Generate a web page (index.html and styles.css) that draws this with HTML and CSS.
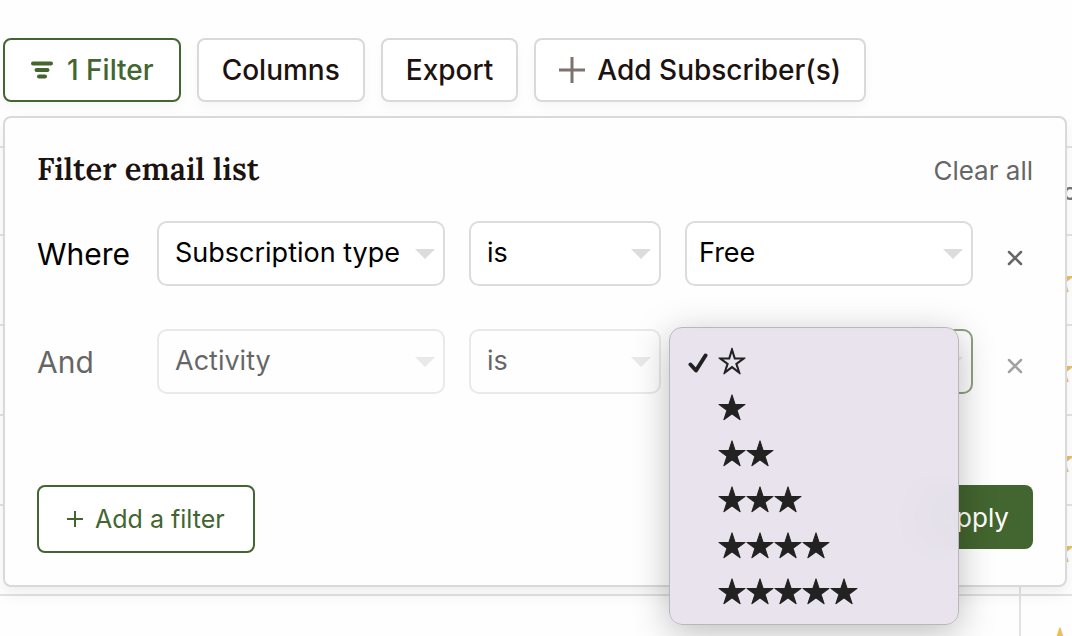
FILE: index.html
```
<!DOCTYPE html>
<html lang="en">
<head>
    <meta charset="UTF-8">
    <meta name="viewport" content="width=device-width, initial-scale=1.0">
    <title>Subscribers</title>
    <link rel="stylesheet" href="styles.css">
</head>
<body>
    <div class="toolbar">
        <button class="button button-active" type="button">
            <svg class="filter-icon" viewBox="0 0 22 18" aria-hidden="true">
                <path d="M2 2.500H20M5.500 9H16.500M8 15.500H14" />
            </svg>
            1 Filter
        </button>
        <button class="button" type="button">Columns</button>
        <button class="button" type="button">Export</button>
        <button class="button" type="button">
            <svg class="plus-icon" viewBox="0 0 26 26" aria-hidden="true">
                <path d="M13 0V26M0 13H26" />
            </svg>
            Add Subscriber(s)
        </button>
    </div>

    <div class="content">
        <table class="subscribers">
            <colgroup>
                <col>
                <col class="activity-col">
            </colgroup>
            <thead>
                <tr><th></th><th>Activity</th></tr>
            </thead>
            <tbody>
                <tr><td></td><td>★</td></tr>
                <tr><td></td><td>★</td></tr>
                <tr><td></td><td>★</td></tr>
                <tr><td></td><td>★</td></tr>
                <tr><td></td><td>★</td></tr>
            </tbody>
        </table>

        <form class="filter-panel">
            <div class="panel-header">
                <h2>Filter email list</h2>
                <button class="clear" type="button">Clear all</button>
            </div>

            <div class="filter-row">
                <label for="field1">Where</label>
                <div class="select">
                    <select id="field1"><option>Subscription type</option></select>
                </div>
                <div class="select">
                    <select aria-label="Condition"><option>is</option></select>
                </div>
                <div class="select select-value">
                    <select aria-label="Value"><option>Free</option></select>
                </div>
                <button class="remove" type="button" aria-label="Remove filter">
                    <svg viewBox="0 0 32 32" aria-hidden="true"><path d="M4 4L28 28M28 4L4 28" /></svg>
                </button>
            </div>

            <div class="filter-row pending">
                <label for="field2">And</label>
                <div class="select">
                    <select id="field2"><option>Activity</option></select>
                </div>
                <div class="select">
                    <select aria-label="Condition"><option>is</option></select>
                </div>
                <div class="menu-anchor">
                    <div class="select select-value select-open">
                        <select aria-label="Activity value"><option></option></select>
                    </div>
                    <ul class="menu" role="listbox" aria-label="Activity">
                        <li role="option" aria-selected="true">
                            <svg class="check" viewBox="0 0 20 20" aria-hidden="true"><path d="M2.500 11.500L8 17.500L17.500 2.500" /></svg>
                            ☆
                        </li>
                        <li role="option">★</li>
                        <li role="option">★★</li>
                        <li role="option">★★★</li>
                        <li role="option">★★★★</li>
                        <li role="option">★★★★★</li>
                    </ul>
                </div>
                <button class="remove" type="button" aria-label="Remove filter">
                    <svg viewBox="0 0 32 32" aria-hidden="true"><path d="M4 4L28 28M28 4L4 28" /></svg>
                </button>
            </div>

            <div class="panel-footer">
                <button class="add-filter" type="button">
                    <svg viewBox="0 0 16 16" aria-hidden="true"><path d="M8 0V16M0 8H16" /></svg>
                    Add a filter
                </button>
                <button class="apply" type="submit">Apply</button>
            </div>
        </form>
    </div>
</body>
</html>
```
FILE: styles.css
```
* {
    box-sizing: border-box;
}
body {
    margin: 0;
    height: 100vh;
    overflow: hidden;
    background: #fefefe;
    color: #000;
    font-family: Inter, "Liberation Sans", sans-serif;
    font-size: 26px;
}
button, select {
    font: inherit;
    color: inherit;
    cursor: pointer;
}
svg {
    fill: none;
    stroke: currentColor;
    flex-shrink: 0;
}

/* Toolbar */
.toolbar {
    display: flex;
    gap: 16px;
    padding: 38px 3px 0;
}
.button {
    display: flex;
    align-items: center;
    gap: 12px;
    height: 64px;
    padding: 0 23px;
    border: 2px solid #d9d9d9;
    border-radius: 8px;
    background: #fff;
    color: #1c1310;
    font-size: 28px;
    font-weight: 500;
    white-space: nowrap;
    box-shadow: 0 6px 12px rgba(0, 0, 0, 0.03);
}
.button-active {
    gap: 14px;
    padding: 0 25px 0 26px;
    border-color: #43652f;
    color: #43652f;
}
.filter-icon {
    width: 22px;
    height: 18px;
    stroke-width: 4;
    stroke-linecap: round;
}
.plus-icon {
    width: 26px;
    height: 26px;
    stroke: #7d726e;
    stroke-width: 3;
}

/* Subscriber table behind the panel */
.content {
    position: relative;
    padding-top: 44px;
}
.subscribers {
    width: 100%;
    table-layout: fixed;
    border-collapse: collapse;
}
.activity-col {
    width: 52px;
}
.subscribers th, .subscribers td {
    height: 90px;
    padding: 0;
    border-top: 2px solid #e2e2e2;
}
.subscribers th {
    height: 88px;
    color: #7d726e;
    font-size: 24px;
    font-weight: 500;
}
.subscribers th:last-child, .subscribers td:last-child {
    padding-left: 25px;
    border-left: 2px solid #e2e2e2;
    text-align: left;
    white-space: nowrap;
}
.subscribers td {
    padding-bottom: 4px;
    color: #e8bf5a;
    font-family: "Noto Sans CJK JP", sans-serif;
    font-size: 28px;
    line-height: 32px;
    -webkit-text-stroke: 1px #e8bf5a;
}

/* Filter panel */
.filter-panel {
    position: absolute;
    top: 14px;
    left: 3px;
    right: 5px;
    padding: 32px;
    border: 2px solid #d9d9d9;
    border-radius: 8px;
    background: #fefefe;
    box-shadow: 0 8px 16px rgba(0, 0, 0, 0.06);
}
.panel-header {
    display: flex;
    justify-content: space-between;
    align-items: center;
    height: 40px;
    margin-bottom: 31px;
}
.panel-header h2 {
    margin: 0;
    padding-bottom: 4px;
    color: #1c1310;
    font-family: Lora, "Liberation Serif", serif;
    font-size: 31px;
    font-weight: 600;
}
.clear {
    padding: 0;
    border: none;
    background: none;
    color: #666;
}
.filter-row {
    display: grid;
    grid-template-columns: 96px 3fr 2fr 3fr 36px;
    gap: 24px;
    align-items: center;
    margin-bottom: 43px;
}
.filter-row label {
    font-size: 30px;
}
.select {
    position: relative;
}
.select::after {
    content: "";
    position: absolute;
    top: 28px;
    right: 10px;
    border: 10px solid transparent;
    border-top-color: #dcdcdc;
    border-bottom: none;
    pointer-events: none;
}
.select select {
    display: block;
    width: 100%;
    height: 65px;
    padding: 0 32px 2px 16px;
    border: 2px solid #dcdcdc;
    border-radius: 10px;
    background: #fff;
    font-size: 27px;
    appearance: none;
}
.select-value select {
    padding-left: 12px;
}
.select-open select {
    border-color: #43652f;
}
.remove {
    display: flex;
    justify-content: center;
    padding: 8px 0 0;
    border: none;
    background: none;
    color: #666;
}
.remove svg {
    width: 16px;
    height: 16px;
    stroke-width: 5;
    stroke-linecap: round;
}
.pending > label, .pending .select, .pending > .remove {
    opacity: 0.6;
}
.panel-footer {
    display: flex;
    justify-content: space-between;
    align-items: flex-start;
    padding-top: 48px;
}
.add-filter {
    display: flex;
    align-items: center;
    gap: 12px;
    height: 68px;
    padding: 0 28px;
    border: 2px solid #43652f;
    border-radius: 8px;
    background: #fff;
    color: #43652f;
    font-size: 25px;
}
.add-filter svg {
    width: 16px;
    height: 16px;
    stroke-width: 2;
}
.apply {
    height: 64px;
    padding: 0 24px;
    border: none;
    border-radius: 8px;
    background: #43652f;
    color: #fff;
}

/* Open star menu */
.menu-anchor {
    position: relative;
}
.menu {
    position: absolute;
    z-index: 10;
    top: -2px;
    left: -16px;
    width: calc(100% + 2px);
    margin: 0;
    padding: 9px 0 11px;
    border: 1px solid #b9b6bc;
    border-radius: 13px;
    background: rgba(232, 226, 237, 0.98);
    backdrop-filter: blur(20px);
    box-shadow: 0 8px 36px rgba(0, 0, 0, 0.26);
    color: #222;
    font-family: "Noto Sans CJK JP", sans-serif;
    font-size: 28px;
    line-height: 46px;
    list-style: none;
    -webkit-text-stroke: 1px #222;
}
.menu li {
    position: relative;
    height: 46px;
    padding-left: 48px;
}
.check {
    position: absolute;
    top: 16px;
    left: 18px;
    width: 20px;
    height: 20px;
    stroke-width: 4;
    stroke-linecap: round;
    stroke-linejoin: round;
}
```
